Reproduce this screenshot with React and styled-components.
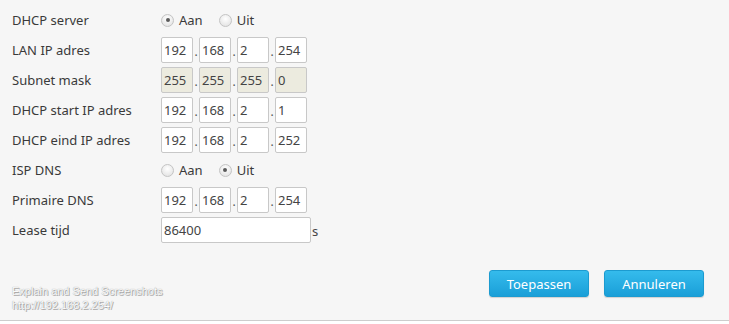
import React from "react";
import styled, { createGlobalStyle } from "styled-components";

const Global = createGlobalStyle`
  html, body { margin: 0; padding: 0; background: #f6f6f6; }
  body { font-family: "Noto Sans", "Open Sans", Arial, sans-serif; }
`;

const Page = styled.div`
  width: 729px;
  height: 324px;
  display: flex;
  flex-direction: column;
  background: #f6f6f6;
  overflow: hidden;
`;

const Form = styled.div`
  padding-top: 5px;
  display: flex;
  flex-direction: column;
`;

const Row = styled.div`
  height: 30px;
  display: flex;
  align-items: center;
`;

const Label = styled.div`
  width: 161px;
  padding-left: 12px;
  box-sizing: border-box;
  font-size: 13px;
  color: #3a3a3a;
  white-space: nowrap;
`;

const Field = styled.div`
  display: flex;
  align-items: center;
`;

const Octet = styled.input`
  width: 32px;
  height: 26px;
  box-sizing: border-box;
  border: 1px solid #c8c8c8;
  border-radius: 2px;
  background: ${(p) => (p.readOnly ? "#ecebdf" : "#ffffff")};
  font-family: "Noto Sans", "Open Sans", Arial, sans-serif;
  font-size: 13px;
  color: #444;
  padding: 0 0 0 2px;
  outline: none;
`;

const Dot = styled.span`
  width: 6px;
  text-align: center;
  font-size: 12px;
  color: #555;
  align-self: flex-end;
  padding-bottom: 5px;
  line-height: 1;
`;

const LongInput = styled(Octet)`
  width: 150px;
`;

const Unit = styled.span`
  margin-left: 1px;
  font-size: 13px;
  color: #444;
  align-self: flex-end;
  padding-bottom: 3px;
`;

const RadioGroup = styled.label`
  display: flex;
  align-items: center;
  margin-right: ${(p) => p.$gap || 0}px;
  font-size: 13px;
  color: #3a3a3a;
  cursor: pointer;
`;

const Radio = styled.input`
  appearance: none;
  -webkit-appearance: none;
  width: 13px;
  height: 13px;
  margin: 0 5px 0 0;
  border-radius: 50%;
  border: 1px solid #c4c4c4;
  background: radial-gradient(circle at 50% 35%, #ffffff 0%, #dedede 100%);
  position: relative;
  box-sizing: border-box;
  &:checked::after {
    content: "";
    position: absolute;
    left: 3.5px;
    top: 3.5px;
    width: 4px;
    height: 4px;
    border-radius: 50%;
    background: #5a5a5a;
  }
`;

const RadioRow = styled.div`
  display: flex;
  align-items: center;
`;

const Footer = styled.div`
  flex: 1;
  display: flex;
  justify-content: space-between;
  padding: 0 25px 0 12px;
`;

const Help = styled.div`
  align-self: flex-end;
  padding-bottom: 8px;
  font-family: "Liberation Sans", Arial, sans-serif;
  font-size: 11px;
  line-height: 14px;
  color: #fbfbfb;
  text-shadow: 0 0 1px #8a8a8a, 1px 1px 0 #b0b0b0;
`;

const Buttons = styled.div`
  align-self: flex-start;
  padding-top: 25px;
  display: flex;
  gap: 15px;
`;

const Button = styled.button`
  width: 100px;
  height: 27px;
  border: 1px solid #1c9bd0;
  border-radius: 3px;
  background: linear-gradient(#35bbec, #1a9fd8);
  color: #fff;
  font-family: "Noto Sans", "Open Sans", Arial, sans-serif;
  font-size: 13px;
  box-shadow: 0 1px 1px rgba(0, 0, 0, 0.15);
  cursor: pointer;
  padding: 0;
`;

const Rule = styled.div`
  height: 3px;
  border-top: 1px solid #cdcdcd;
  background: #ffffff;
`;

function IpField({ values, readOnly }) {
  return (
    <Field>
      {values.map((v, i) => (
        <React.Fragment key={i}>
          {i > 0 && <Dot>.</Dot>}
          <Octet defaultValue={v} readOnly={readOnly} />
        </React.Fragment>
      ))}
    </Field>
  );
}

function RadioPair({ name, on }) {
  return (
    <RadioRow>
      <RadioGroup $gap={16}>
        <Radio type="radio" name={name} defaultChecked={on} />
        Aan
      </RadioGroup>
      <RadioGroup>
        <Radio type="radio" name={name} defaultChecked={!on} />
        Uit
      </RadioGroup>
    </RadioRow>
  );
}

export default function App() {
  return (
    <Page>
      <Global />
      <Form>
        <Row>
          <Label>DHCP server</Label>
          <RadioPair name="dhcp" on />
        </Row>
        <Row>
          <Label>LAN IP adres</Label>
          <IpField values={["192", "168", "2", "254"]} />
        </Row>
        <Row>
          <Label>Subnet mask</Label>
          <IpField values={["255", "255", "255", "0"]} readOnly />
        </Row>
        <Row>
          <Label>DHCP start IP adres</Label>
          <IpField values={["192", "168", "2", "1"]} />
        </Row>
        <Row>
          <Label>DHCP eind IP adres</Label>
          <IpField values={["192", "168", "2", "252"]} />
        </Row>
        <Row>
          <Label>ISP DNS</Label>
          <RadioPair name="isp" on={false} />
        </Row>
        <Row>
          <Label>Primaire DNS</Label>
          <IpField values={["192", "168", "2", "254"]} />
        </Row>
        <Row>
          <Label>Lease tijd</Label>
          <Field>
            <LongInput defaultValue="86400" />
            <Unit>s</Unit>
          </Field>
        </Row>
      </Form>
      <Footer>
        <Help>
          Explain and Send Screenshots
          <br />
          http://192.168.2.254/
        </Help>
        <Buttons>
          <Button>Toepassen</Button>
          <Button>Annuleren</Button>
        </Buttons>
      </Footer>
      <Rule />
    </Page>
  );
}
